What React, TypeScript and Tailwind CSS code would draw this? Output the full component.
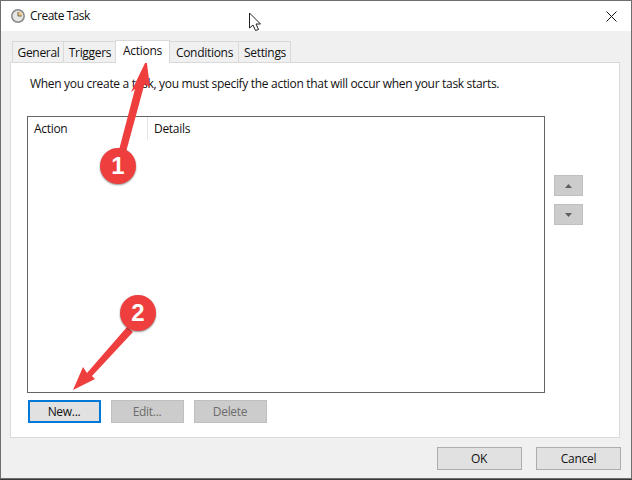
import React from 'react';

const font = "font-['Open_Sans','Noto_Sans',sans-serif]";

const tabs = ['General', 'Triggers', 'Actions', 'Conditions', 'Settings'];
const tabWidths: Record<string, string> = {
  General: 'w-[52px]',
  Triggers: 'w-[53px]',
  Actions: 'w-[55px]',
  Conditions: 'w-[70px]',
  Settings: 'w-[53px]',
};

function Tabs() {
  return (
    <div className="flex items-end h-[31px] pl-[12px]">
      {tabs.map(t =>
        t === 'Actions' ? (
          <div key={t} className={`${tabWidths[t]} h-[23px] -mb-px -ml-px z-10 bg-white border border-b-0 border-[#d9d9d9] flex justify-center pt-[1px] text-[12px] tracking-[-0.3px] text-[#111]`}>
            {t}
          </div>
        ) : (
          <div key={t} className={`${tabWidths[t]} h-[21px] -ml-px bg-[#f0f0f0] border border-b-0 border-[#d9d9d9] flex justify-center items-center pt-[2px] pl-[1px] text-[12px] tracking-[-0.3px] text-[#111]`}>
            {t}
          </div>
        )
      )}
    </div>
  );
}

function FlatButton({ label, className }: { label: string; className: string }) {
  return <div className={`flex items-center justify-center text-[12px] tracking-[-0.3px] border ${className}`}>{label}</div>;
}

function MoveButton({ up }: { up?: boolean }) {
  return (
    <div className="w-[29px] h-[21px] bg-[#cccccc] border border-[#bfbfbf] flex items-center justify-center">
      <svg width="7" height="4" viewBox="0 0 7 4" className="block">
        <path d={up ? 'M3.5 0 L7 4 L0 4 Z' : 'M0 0 L7 0 L3.5 4 Z'} fill="#5f5f5f" />
      </svg>
    </div>
  );
}

function Badge({ n, className }: { n: string; className: string }) {
  return (
    <div className={`absolute w-[36px] h-[36px] rounded-full bg-[#ef3e3e] shadow-[0_1px_2px_rgba(0,0,0,0.45)] flex items-center justify-center text-white font-bold text-[24px] leading-none font-['Liberation_Sans',sans-serif] ${className}`}>
      {n}
    </div>
  );
}

export default function App() {
  return (
    <div className={`relative w-[632px] h-[480px] overflow-hidden bg-[#3a3a3a] text-[#111] ${font}`}>
      <div className="h-[479px] border border-[#6e6e6e] bg-[#f0f0f0] flex flex-col">
        {/* Title bar */}
        <div className="h-[30px] bg-white flex items-center pl-[10px] pr-[14px]">
          <svg width="14" height="14" viewBox="0 0 14 14" className="mr-[5px]">
            <circle cx="7" cy="7" r="6.2" fill="#e6e6e2" stroke="#85898c" strokeWidth="1.5" />
            <path d="M7 2.5 A4.5 4.5 0 0 1 11.5 7 H7 Z" fill="#e9c98a" />
            <path d="M7 3 V7 H10.5" fill="none" stroke="#6a6250" strokeWidth="1" />
          </svg>
          <span className="text-[12px] tracking-[-0.5px]">Create Task</span>
          <svg width="11" height="11" viewBox="0 0 11 11" className="ml-auto mt-[1px]">
            <path d="M0.5 0.5 L10.5 10.5 M10.5 0.5 L0.5 10.5" stroke="#111" strokeWidth="1" />
          </svg>
        </div>

        <Tabs />

        {/* Tab panel */}
        <div className="ml-[9px] w-[610px] h-[376px] bg-white border border-[#d9d9d9] flex flex-col">
          <div className="pl-[19px] pt-[12px] h-[53px] text-[12px] tracking-[-0.31px] leading-[18px]">
            When you create a task, you must specify the action that will occur when your task starts.
          </div>
          <div className="flex">
            <div className="ml-[16px] w-[518px] h-[277px] border border-[#646464] bg-white">
              <div className="flex h-[23px] text-[12px] tracking-[-0.3px]">
                <div className="w-[120px] border-r border-[#e5e5e5] pl-[6px] pt-[1px] flex items-center">Action</div>
                <div className="pl-[6px] pt-[1px] flex items-center">Details</div>
              </div>
            </div>
            <div className="ml-[9px] pt-[59px] flex flex-col gap-[8px]">
              <MoveButton up />
              <MoveButton />
            </div>
          </div>
          <div className="flex gap-[10px] ml-[17px] mt-[7px]">
            <FlatButton label="New..." className="w-[73px] h-[23px] pr-[1px] bg-[#e1e1e1] border-2 border-[#0078d7] text-[#111]" />
            <FlatButton label="Edit..." className="w-[73px] h-[23px] pr-[1px] bg-[#cccccc] border-[#bfbfbf] text-[#6d6d6d]" />
            <FlatButton label="Delete" className="w-[73px] h-[23px] pr-[1px] bg-[#cccccc] border-[#bfbfbf] text-[#6d6d6d]" />
          </div>
        </div>

        {/* Footer */}
        <div className="flex justify-end gap-[14px] pr-[10px] pt-[9px]">
          <FlatButton label="OK" className="w-[85px] h-[23px] pr-[1px] bg-[#e1e1e1] border-[#adadad]" />
          <FlatButton label="Cancel" className="w-[85px] h-[23px] bg-[#e1e1e1] border-[#adadad]" />
        </div>
      </div>

      {/* Annotations */}
      <svg width="632" height="480" viewBox="0 0 632 480" className="absolute left-0 top-0 pointer-events-none">
        <path d="M146.5 60 L150 87 L144.5 84 L126 152 L119 150 L135 89 L131 92 Z" fill="#ef3e3e" />
        <path d="M73 390 L83 367 L87 373 L127 327 L133 332 L92 376 L95 379 Z" fill="#ef3e3e" />
        {/* Mouse cursor */}
        <path d="M249.5 13 L249.5 28 L253 25 L255.5 30.5 L258.5 29.5 L256 24 L260.5 24 Z" fill="#fff" stroke="#222" strokeWidth="1" />
      </svg>
      <Badge n="1" className="left-[100px] top-[148px]" />
      <Badge n="2" className="left-[120px] top-[295px]" />
    </div>
  );
}
